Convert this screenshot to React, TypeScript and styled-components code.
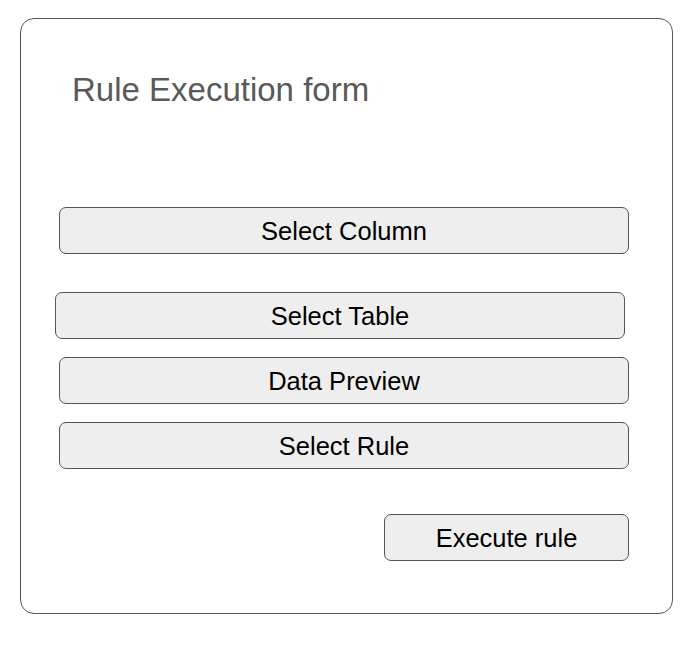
import styled, { createGlobalStyle } from "styled-components";

const GlobalStyle = createGlobalStyle`
  html, body {
    margin: 0;
    padding: 0;
    background: #fff;
    font-family: "Liberation Sans", Arial, sans-serif;
  }
`;

const Page = styled.div`
  padding: 18px 0 0 20px;
`;

const Card = styled.div`
  box-sizing: border-box;
  width: 653px;
  height: 596px;
  border: 1px solid #555;
  border-radius: 14px;
  padding: 52px 42px 0 38px;
  display: flex;
  flex-direction: column;
`;

const Title = styled.h1`
  margin: 0 0 98px 13px;
  font-size: 33px;
  line-height: 38px;
  font-weight: 400;
  color: #595959;
`;

const FieldButton = styled.button<{ $shift?: number; $gap?: number }>`
  box-sizing: border-box;
  width: 570px;
  height: 47px;
  margin: ${({ $gap }) => $gap ?? 0}px 0 0 ${({ $shift }) => $shift ?? 0}px;
  border: 1px solid #555;
  border-radius: 7px;
  background: #eeeeee;
  color: #000;
  font-family: "Liberation Sans", Arial, sans-serif;
  font-size: 25.5px;
  padding: 2px 0 0;
  display: flex;
  align-items: center;
  justify-content: center;
`;

const Actions = styled.div`
  display: flex;
  justify-content: flex-end;
  width: 570px;
  margin-top: 45px;
`;

const ExecuteButton = styled(FieldButton)`
  width: 245px;
`;

export default function App() {
  return (
    <>
      <GlobalStyle />
      <Page>
        <Card>
          <Title>Rule Execution form</Title>
          <FieldButton>Select Column</FieldButton>
          <FieldButton $gap={38} $shift={-4}>
            Select Table
          </FieldButton>
          <FieldButton $gap={18}>Data Preview</FieldButton>
          <FieldButton $gap={18}>Select Rule</FieldButton>
          <Actions>
            <ExecuteButton>Execute rule</ExecuteButton>
          </Actions>
        </Card>
      </Page>
    </>
  );
}
